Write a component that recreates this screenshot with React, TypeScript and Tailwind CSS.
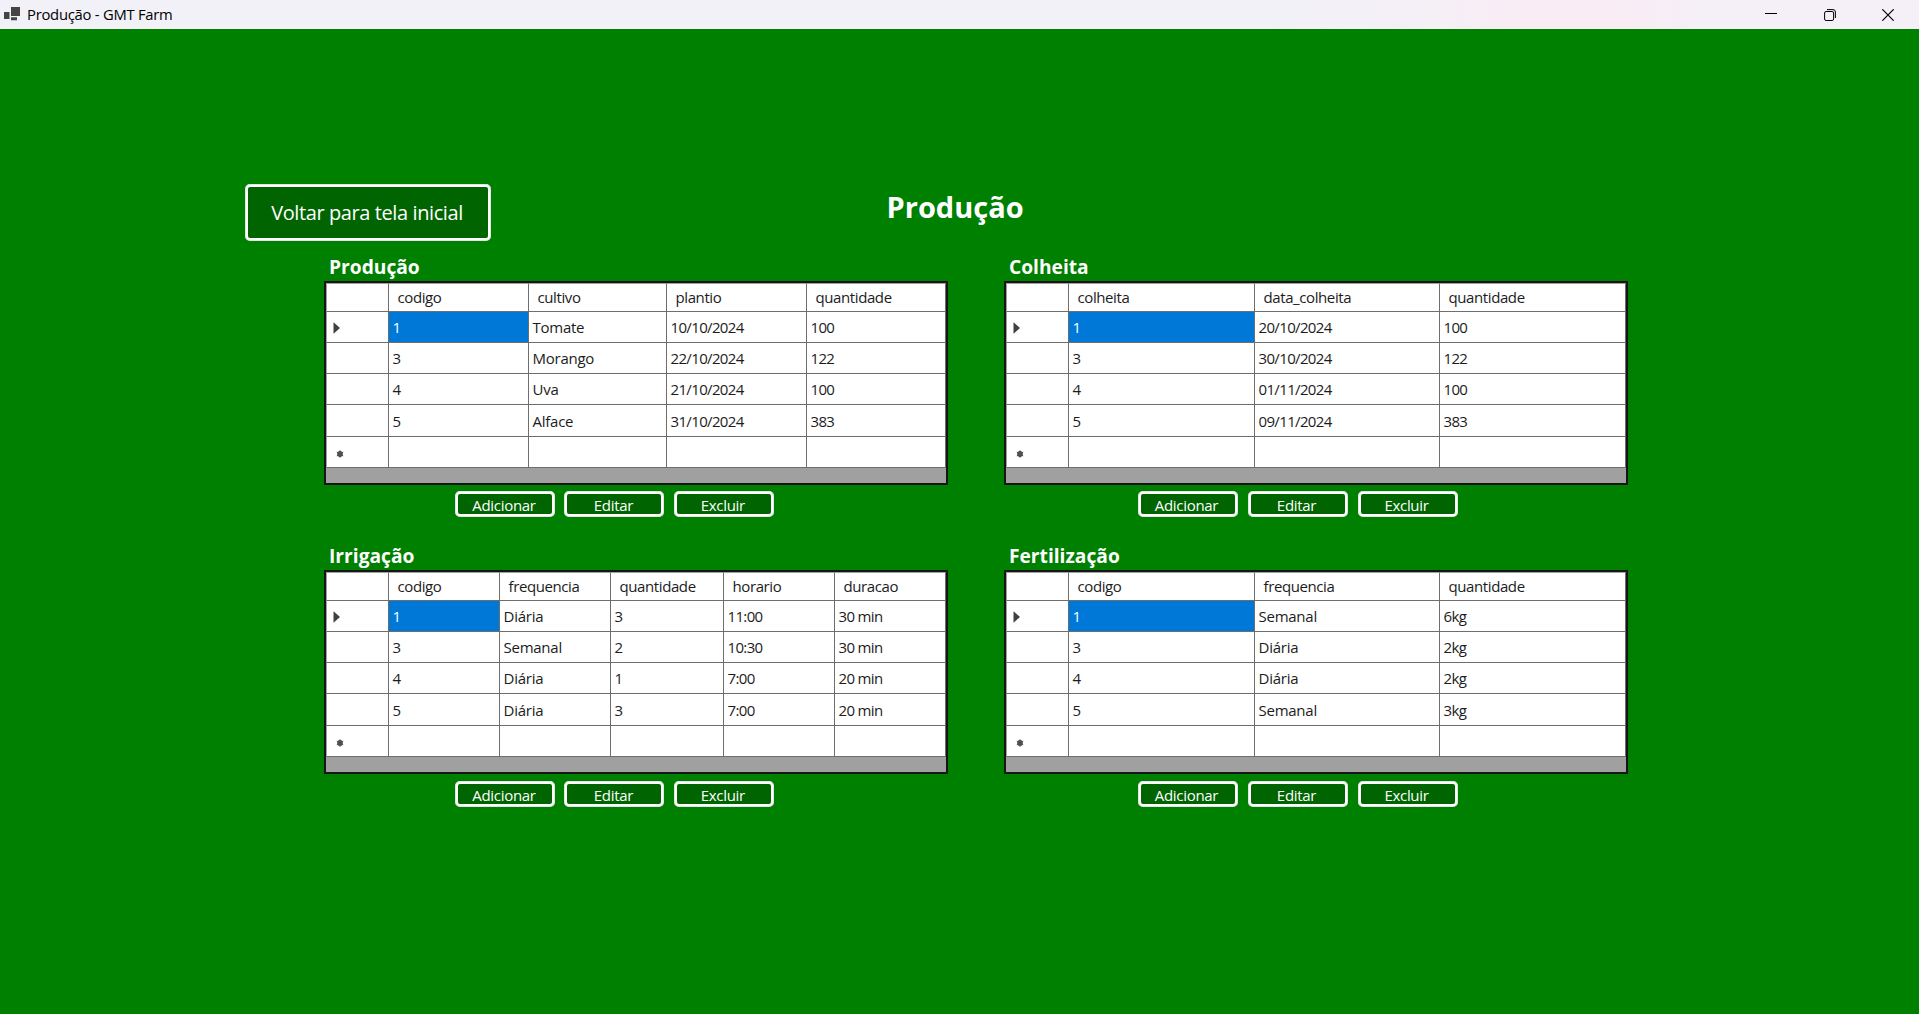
import React from "react";

type TableData = {
  title: string;
  columns: string[];
  widths: string;
  rows: string[][];
  lower: boolean;
  buttons: string;
};

const tables: TableData[] = [
  {
    title: "Produção",
    columns: ["codigo", "cultivo", "plantio", "quantidade"],
    widths: "grid-cols-[63px_140px_138px_140px_139px]",
    rows: [
      ["1", "Tomate", "10/10/2024", "100"],
      ["3", "Morango", "22/10/2024", "122"],
      ["4", "Uva", "21/10/2024", "100"],
      ["5", "Alface", "31/10/2024", "383"],
    ],
    lower: false,
    buttons: "ml-[131px] gap-[9.4px]",
  },
  {
    title: "Colheita",
    columns: ["colheita", "data_colheita", "quantidade"],
    widths: "grid-cols-[63px_186px_185px_186px]",
    rows: [
      ["1", "20/10/2024", "100"],
      ["3", "30/10/2024", "122"],
      ["4", "01/11/2024", "100"],
      ["5", "09/11/2024", "383"],
    ],
    lower: false,
    buttons: "ml-[133.5px] gap-[10px]",
  },
  {
    title: "Irrigação",
    columns: ["codigo", "frequencia", "quantidade", "horario", "duracao"],
    widths: "grid-cols-[63px_111px_111px_113px_111px_111px]",
    rows: [
      ["1", "Diária", "3", "11:00", "30 min"],
      ["3", "Semanal", "2", "10:30", "30 min"],
      ["4", "Diária", "1", "7:00", "20 min"],
      ["5", "Diária", "3", "7:00", "20 min"],
    ],
    lower: true,
    buttons: "ml-[131px] gap-[9.4px]",
  },
  {
    title: "Fertilização",
    columns: ["codigo", "frequencia", "quantidade"],
    widths: "grid-cols-[63px_186px_185px_186px]",
    rows: [
      ["1", "Semanal", "6kg"],
      ["3", "Diária", "2kg"],
      ["4", "Diária", "2kg"],
      ["5", "Semanal", "3kg"],
    ],
    lower: true,
    buttons: "ml-[133.5px] gap-[10px]",
  },
];

function DataTable({ data }: { data: TableData }) {
  const rows = [...data.rows, data.columns.map(() => "")];
  return (
    <div className="h-[204px] w-[624px] border-2 border-[#161616] bg-[#a0a0a0]">
      <div className={`grid ${data.widths} grid-rows-[28.5px_repeat(5,31.25px)] text-[15px] text-[#1c1c1c]`}>
        <div className="border-t border-r border-b border-l border-[#6e6e6e] border-t-[#a0a0a0] border-l-[#a0a0a0] bg-white" />
        {data.columns.map((name) => (
          <div key={name} className="flex items-center border-t border-r border-b border-[#6e6e6e] border-t-[#a0a0a0] bg-white pl-[8.5px] tracking-[-0.4px]">
            {name}
          </div>
        ))}
        {rows.map((row, r) => (
          <React.Fragment key={r}>
            <div className="flex items-center border-r border-b border-l border-[#6e6e6e] border-l-[#a0a0a0] bg-white">
              {r === 0 && (
                <svg className="mt-[3px] ml-[6px]" width="8" height="12" viewBox="0 0 8 12">
                  <path d="M0.5 0.3 L7 6 L0.5 11.7 Z" fill="#404040" />
                </svg>
              )}
              {r === 4 && (
                <svg className="mt-[5px] ml-[9px]" width="8" height="8" viewBox="0 0 8 8">
                  <circle cx="4" cy="4" r="2.9" fill="#505050" />
                  <path d="M4 .3V7.7M.8 2.2L7.2 5.8M.8 5.8L7.2 2.2" stroke="#505050" strokeWidth="1" />
                </svg>
              )}
            </div>
            {row.map((value, c) => (
              <div
                key={c}
                className={`flex items-center border-r border-b border-[#6e6e6e] pt-px pl-[3.5px] ${
                  r === 0 && c === 0 ? "bg-[#0078d7] text-white" : "bg-white"
                } ${/^[A-Z]/.test(value) ? "tracking-[-0.25px]" : "tracking-[-0.65px]"}`}
              >
                {value}
              </div>
            ))}
          </React.Fragment>
        ))}
      </div>
    </div>
  );
}

function Panel({ data }: { data: TableData }) {
  return (
    <section className="w-[624px]">
      <h2 className="h-[29px] pl-[5px] text-[19.2px] leading-[30px] font-bold">{data.title}</h2>
      <DataTable data={data} />
      <div className={`flex ${data.lower ? "mt-[7px]" : "mt-[6px]"} ${data.buttons}`}>
        {["Adicionar", "Editar", "Excluir"].map((label) => (
          <button
            key={label}
            className="flex h-[26px] w-[100px] items-center justify-center rounded-[5px] border-[3px] border-white bg-[#006400] pt-[2px] pr-[2px] text-[15px] font-medium tracking-[-0.3px] outline outline-[#c0b8c0]/40 -outline-offset-1"
          >
            {label}
          </button>
        ))}
      </div>
    </section>
  );
}

export default function App() {
  return (
    <div className="flex h-[1014px] w-[1919px] flex-col overflow-hidden bg-[#008000] font-['Open_Sans','Noto_Sans',sans-serif] text-white">
      <header className="flex h-[29px] shrink-0 items-center bg-[linear-gradient(90deg,#f2f1f8_0px,#f2f1f8_1250px,#f5eff6_1440px,#f9ecf5_1520px,#f9ecf5_1620px,#f5eff7_1700px)] text-black">
        <svg className="ml-1" width="17" height="16" viewBox="0 0 17 16">
          <path d="M7 0h9v9H7zM0 5h5.5v7H0zM7 10.3h6v3H7z" fill="#454545" />
        </svg>
        <span className="ml-1.5 text-[14.8px] tracking-[-0.25px]">Produção - GMT Farm</span>
        <div className="mr-[25px] ml-auto flex items-center gap-[46.5px]">
          <svg width="12" height="12" viewBox="0 0 12 12" fill="none" stroke="#000">
            <path d="M0 4.5H12" />
          </svg>
          <svg width="12" height="12" viewBox="0 0 12 12" fill="none" stroke="#000">
            <rect x=".6" y="2.5" width="9" height="9" rx="1.5" />
            <path d="M3 .6H9Q11.4.6 11.4 3V9" />
          </svg>
          <svg width="12" height="12" viewBox="0 0 12 12" fill="none" stroke="#000" strokeWidth="1.2">
            <path d="M.3.3L11.7 11.7M11.7.3L.3 11.7" />
          </svg>
        </div>
      </header>
      <main className="flex flex-col">
        <div className="mt-[155px] ml-[245px] flex h-[68px] items-start">
          <button className="flex h-[57px] w-[246px] items-center justify-center rounded-[5px] border-[3px] border-white bg-[#006400] pt-px pr-[2px] text-[20px] font-medium tracking-[-0.4px] outline outline-[#c0b8c0]/40 -outline-offset-1">
            Voltar para tela inicial
          </button>
          <h1 className="ml-[395.5px] text-[29px] leading-[46px] font-bold">Produção</h1>
        </div>
        <div className="ml-[324px] grid grid-cols-[624px_624px] grid-rows-[289px_289px] gap-x-14">
          {tables.map((data) => (
            <Panel key={data.title} data={data} />
          ))}
        </div>
      </main>
    </div>
  );
}
